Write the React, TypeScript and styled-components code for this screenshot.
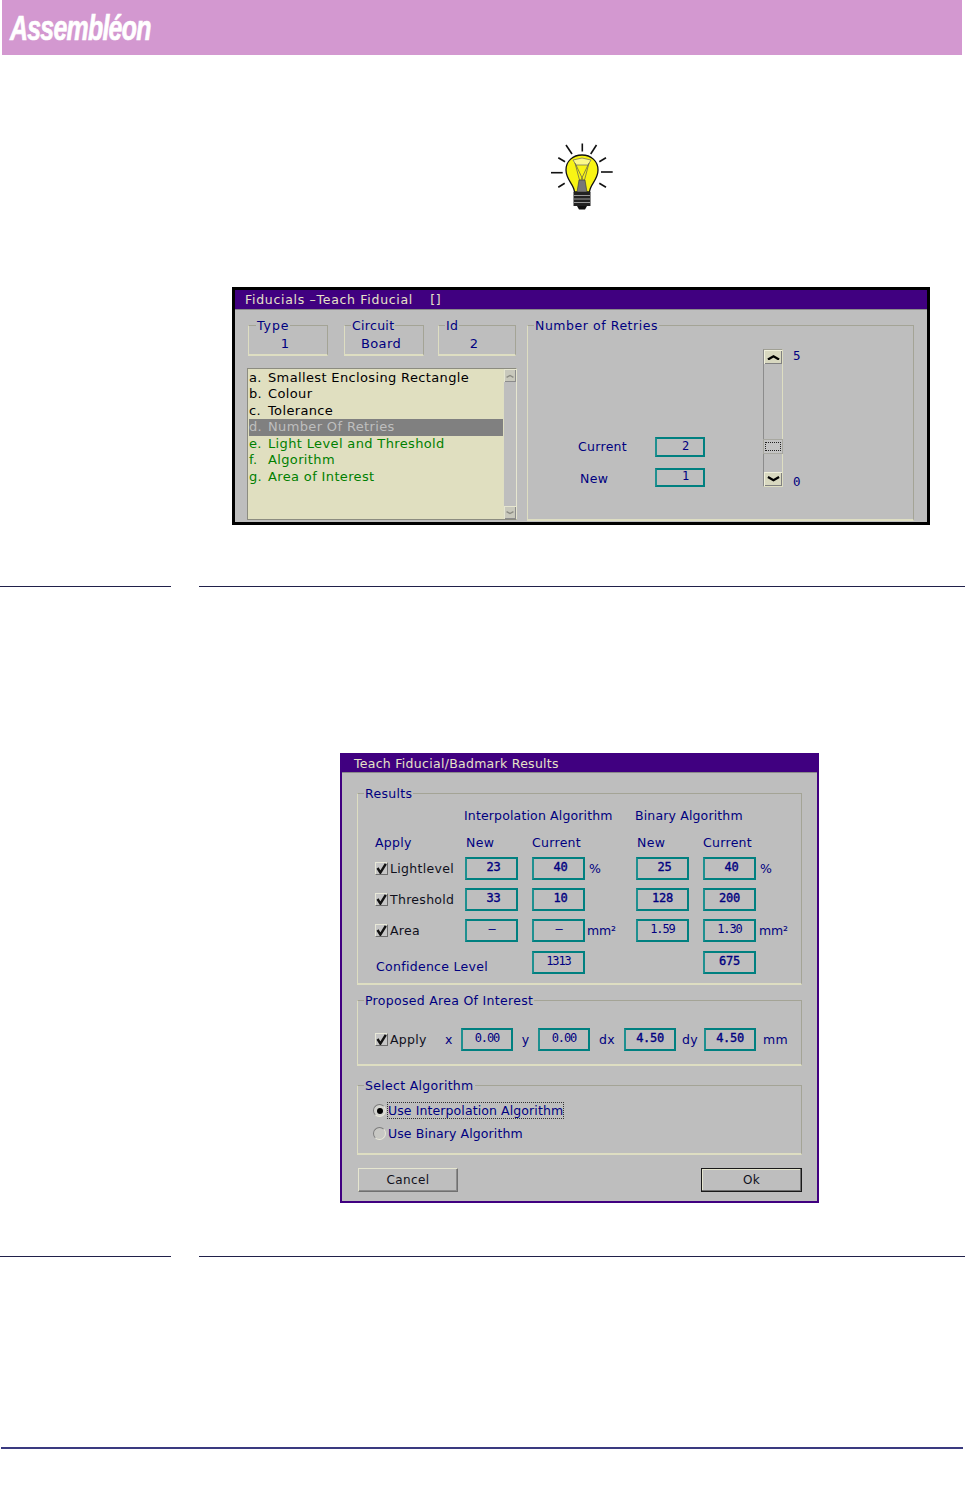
import React from 'react';
import styled, { createGlobalStyle } from 'styled-components';

const Global = createGlobalStyle`
  html, body { margin: 0; padding: 0; background: #fff; }
  body { font-family: "DejaVu Sans", sans-serif; font-size: 13px; color: #000080; }
`;

const Page = styled.div`
  width: 965px;
  height: 1502px;
  overflow: hidden;
`;

const Banner = styled.header`
  margin-left: 2px;
  width: 960px;
  height: 55px;
  background: #d398d0;
  display: flex;
  align-items: flex-end;
  box-sizing: border-box;
  padding: 0 0 12px 8px;
`;

const Logo = styled.span`
  font-family: "Liberation Sans", Arial, sans-serif;
  font-weight: 700;
  font-style: italic;
  font-size: 35px;
  line-height: 30px;
  color: #fff;
  letter-spacing: -1px;
  -webkit-text-stroke: 0.7px #fff;
  transform: scaleX(0.71);
  transform-origin: left bottom;
`;

const Bulb = styled.svg`
  display: block;
  margin: 87px 0 0 550px;
`;

const Rule = styled.div`
  display: flex;
  justify-content: space-between;
  margin-top: ${p => p.$top}px;

  &::before, &::after {
    content: '';
    height: 1px;
    background: #20204a;
  }
  &::before { width: 171px; }
  &::after { width: 766px; }
`;

const FootRule = styled.div`
  margin: 190px 0 0 1px;
  width: 962px;
  height: 2px;
  background: #3a3a80;
`;

const Dialog = styled.section`
  box-sizing: border-box;
  width: ${p => p.$width}px;
  height: ${p => p.$height}px;
  margin: ${p => p.$top}px 0 0 ${p => p.$left}px;
  border: ${p => p.$frame};
  background: #bebebe;
  display: flex;
  flex-direction: column;
`;

const TitleBar = styled.div`
  height: ${p => p.$height}px;
  flex: none;
  background: #400080;
  color: #e6e2c8;
  padding-left: ${p => p.$pad}px;
  line-height: ${p => p.$height}px;
  font-size: 12.5px;
  letter-spacing: ${p => p.$tracking}px;
  white-space: pre;
  border-bottom: 1px solid #8a8a8a;
`;

const FiducialBody = styled.div`
  flex: 1;
  display: flex;
  gap: 10px;
  padding: 8px 13px 2px 12px;
  min-height: 0;
`;

const LeftColumn = styled.div`
  width: 270px;
  display: flex;
  flex-direction: column;
`;

const InfoRow = styled.div`
  display: flex;
  padding-left: 1px;
`;

const Group = styled.fieldset`
  box-sizing: border-box;
  margin: ${p => p.$top || 0}px 0 0 ${p => p.$gapLeft || 0}px;
  min-width: 0;
  padding: 0;
  border-style: solid;
  border-width: 1px 1px 2px 1px;
  border-color: #a4a496 #a4a496 #dedec2 #dedec2;
  ${p => p.$width ? `width: ${p.$width}px;` : ''}
  ${p => p.$height ? `height: ${p.$height}px;` : ''}
`;

const Legend = styled.legend`
  margin-left: ${p => p.$left || 6}px;
  padding: 0 1px;
  font-size: 12.5px;
  line-height: 15px;
  letter-spacing: ${p => p.$tracking || 0.3}px;
  color: #000080;
`;

const InfoValue = styled.div`
  text-align: center;
  padding-right: 6px;
  font-size: 13px;
  line-height: 22px;
  letter-spacing: 0.4px;
`;

const ListBox = styled.div`
  margin-top: 12px;
  height: 152px;
  box-sizing: border-box;
  border: 1px solid;
  border-color: #8c8c80 #e6e6d0 #8c8c80 #8c8c80;
  background: #e0dfc0;
  display: flex;
`;

const ListItems = styled.div`
  flex: 1;
  padding: 1px 0 0 1px;
`;

const ListRow = styled.div`
  display: flex;
  height: 16.45px;
  line-height: 16.45px;
  font-size: 13px;
  letter-spacing: 0.36px;
  white-space: pre;
  color: ${p => p.$done ? '#000' : p.$active ? '#bebebe' : '#008000'};
  background: ${p => p.$active ? '#808080' : 'transparent'};
`;

const Marker = styled.span`
  width: 19px;
  flex: none;
`;

const ListScroll = styled.div`
  width: 12px;
  background: #bebebe;
  display: flex;
  flex-direction: column;
  justify-content: space-between;
  border-left: 1px solid #dedec2;
`;

const ScrollCap = styled.div`
  height: 13px;
  background: #c8c8bc;
  display: flex;
  align-items: center;
  justify-content: center;
  box-shadow: inset 1px 1px 0 #e6e6d0, inset -1px -1px 0 #8c8c8c;
`;

const RetriesBody = styled.div`
  display: flex;
  justify-content: flex-start;
  height: 171px;
`;

const RetriesFields = styled.div`
  width: 128px;
  margin-left: 50px;
  padding-top: 104px;
  display: grid;
  grid-template-columns: 77px 50px;
  grid-template-rows: 20px 19px;
  row-gap: 11px;
  align-items: center;
`;

const Label = styled.span`
  font-size: 12.5px;
  line-height: 14px;
  letter-spacing: 0.3px;
  white-space: pre;
  color: ${p => p.$dark ? '#10101c' : '#000080'};
  ${p => p.$nudge ? `margin-left: ${p.$nudge}px;` : ''}
  ${p => p.$drop ? `padding-top: ${p.$drop}px;` : ''}
  ${p => p.$lift ? `margin-top: -${p.$lift}px;` : ''}
  ${p => p.$center ? 'justify-self: center;' : ''}
`;

const Readout = styled.div`
  box-sizing: border-box;
  width: ${p => p.$width || 53}px;
  height: ${p => p.$height || 23}px;
  flex: none;
  border: 2px solid #008080;
  border-color: #008080 #008080 #008080 #1f9090;
  text-align: center;
  padding-left: ${p => p.$shift || 0}px;
  font-family: "DejaVu Sans Mono", monospace;
  font-size: 12px;
  letter-spacing: ${p => p.$bold ? -0.3 : -1.1}px;
  -webkit-text-stroke: ${p => p.$bold ? '0.35px #000080' : '0'};
  line-height: ${p => (p.$height || 23) - 6}px;
  color: #000080;
`;

const Slider = styled.div`
  margin-left: 57px;
  margin-top: 16px;
  width: 20px;
  height: 138px;
  box-sizing: border-box;
  border: 1px solid;
  border-color: #a0a094 #dedec2 #dedec2 #8c8c8c;
  display: flex;
  flex-direction: column;
  justify-content: space-between;
`;

const SliderCap = styled.div`
  height: 14px;
  background: #d8d8c0;
  box-shadow: inset 1px 1px 0 #f0f0dc, inset -1px -1px 0 #808080;
  display: flex;
  align-items: center;
  justify-content: center;
`;

const SliderThumb = styled.div`
  height: 13px;
  margin-top: 76px;
  margin-bottom: 19px;
  background: #c4c4c4;
  box-shadow: 0 0 0 1px #a8a8a0;
  display: flex;
  padding: 2px 1px;
  box-sizing: border-box;

  &::after {
    content: '';
    flex: 1;
    border: 1px dotted #222;
  }
`;

const SliderEnds = styled.div`
  margin: 16px 0 0 10px;
  height: 140px;
  display: flex;
  flex-direction: column;
  justify-content: space-between;
  font-family: "DejaVu Sans Mono", monospace;
  font-size: 12.5px;
  line-height: 14px;
`;

const ResultsBody = styled.div`
  flex: 1;
  padding: 13px 15px 8px 15px;
  display: flex;
  flex-direction: column;
`;

const ResultsGrid = styled.div`
  display: grid;
  grid-template-columns: 90px 67px 104px 67px 53px auto;
  grid-template-rows: 28px 20px 31px 31px 32px 23px;
  padding: 8px 0 9px 17px;
  align-items: start;
`;

const Heading = styled(Label)`
  grid-column: ${p => p.$span || 'auto'};
  letter-spacing: 0.15px;
  margin-left: -1px;
`;

const Cell = styled.div`
  display: flex;
  align-items: center;
  height: 23px;
`;

const Unit = styled(Label)`
  margin-left: ${p => p.$gap}px;
  letter-spacing: -0.2px;
`;

const Check = styled.span`
  box-sizing: border-box;
  width: 13px;
  height: 13px;
  flex: none;
  margin-right: 2px;
  background: #c6c6c6;
  border: 1px solid;
  border-color: #e8e8d8 #6c6c6c #6c6c6c #e8e8d8;
  display: flex;
  align-items: center;
  justify-content: center;
`;

const ConfidenceLabel = styled(Label)`
  grid-column: 1 / 3;
  display: block;
  padding: 9px 0 0 1px;
`;

const AreaRow = styled.div`
  display: grid;
  grid-template-columns: 70px 16px 52px 25px 52px 34px 52px 28px 52px auto;
  align-items: center;
  padding: 20px 0 13px 17px;
`;

const AlgorithmList = styled.div`
  padding: 9px 0 0 15px;
  display: flex;
  flex-direction: column;
  gap: 6px;
  height: 60px;
  box-sizing: border-box;
`;

const RadioRow = styled.div`
  display: flex;
  align-items: center;
  height: 17px;
`;

const Radio = styled.span`
  box-sizing: border-box;
  width: 13px;
  height: 13px;
  border-radius: 50%;
  background: ${p => p.$on ? '#d4d4d0' : '#c8c8c4'};
  border: 1px solid;
  border-color: #7c7c7c #e8e8d8 #e8e8d8 #7c7c7c;
  display: flex;
  align-items: center;
  justify-content: center;

  &::after {
    content: '';
    display: ${p => p.$on ? 'block' : 'none'};
    width: 6px;
    height: 6px;
    border-radius: 50%;
    background: #000;
  }
`;

const RadioText = styled.span`
  margin-left: 1px;
  font-size: 12.5px;
  line-height: 15px;
  letter-spacing: 0.1px;
  color: #000080;
  border: 1px ${p => p.$focus ? 'dotted #333' : 'solid transparent'};
`;

const Actions = styled.div`
  margin-top: 13px;
  display: flex;
  justify-content: space-between;
  padding: 0 0 0 1px;
`;

const Action = styled.button`
  box-sizing: border-box;
  width: ${p => p.$primary ? 101 : 100}px;
  height: 24px;
  padding: 0;
  background: #bebebe;
  font-family: "DejaVu Sans", sans-serif;
  font-size: 12px;
  letter-spacing: 0.4px;
  color: #10101c;
  border: 1px solid;
  border-color: ${p => p.$primary ? '#1a1a1a' : '#e6e6d0 #707070 #707070 #e6e6d0'};
  box-shadow: ${p => p.$primary
    ? 'inset -1px -1px 0 #707070, inset 1px 1px 0 #e6e6d0'
    : 'inset -1px -1px 0 #8c8c8c'};
`;

const Chevron = ({ up, size = 13, color = '#000' }: { up?: boolean; size?: number; color?: string }) => (
  <svg width={size} height={size * 0.5} viewBox="0 0 14 7">
    <path
      d={up ? 'M1 6 L7 2.5 L13 6' : 'M1 1 L7 4.5 L13 1'}
      fill="none"
      stroke={color}
      strokeWidth="2.4"
    />
  </svg>
);

const Tick = () => (
  <svg width="11" height="11" viewBox="0 0 11 11">
    <path d="M1.5 5 L4.4 9.6 L9.8 0.8" fill="none" stroke="#111" strokeWidth="2.4" />
  </svg>
);

const rays = [
  [582.3, 143.5, 582.3, 151.5],
  [566, 145, 572, 154],
  [596.5, 145, 590.7, 154],
  [558.3, 157.7, 565, 161.7],
  [606, 157.7, 599.3, 161.7],
  [551, 172.7, 562.7, 172.7],
  [601, 172, 612.7, 172],
  [558.3, 187.3, 564.7, 183.3],
  [606, 187.3, 599.3, 183.3]
];

const menu = [
  ['a.', 'Smallest Enclosing Rectangle', 'done'],
  ['b.', 'Colour', 'done'],
  ['c.', 'Tolerance', 'done'],
  ['d.', 'Number Of Retries', 'active'],
  ['e.', 'Light Level and Threshold', ''],
  ['f.', 'Algorithm', ''],
  ['g.', 'Area of Interest', '']
];

const results = [
  { name: 'Lightlevel', values: ['23', '40', '25', '40'], unit: '%' },
  { name: 'Threshold', values: ['33', '10', '128', '200'], unit: '' },
  { name: 'Area', values: ['–', '–', '1.59', '1.30'], unit: 'mm²' }
];

const Value = ({ text }: { text: string }) => (
  <Readout $bold={!text.includes('.') && text.length > 1 && text !== '1313'} $shift={text.length === 2 ? 4 : 0}>
    {text}
  </Readout>
);

export default function App() {
  function renderBulb() {
    return (
      <Bulb width="64" height="70" viewBox="550 142 64 70">
        {rays.map((r, i) => (
          <line key={i} x1={r[0]} y1={r[1]} x2={r[2]} y2={r[3]} stroke="#111" strokeWidth="1.6" />
        ))}
        <path
          d="M574.5 192 C574 184 566 180 566 170 C566 161 573 155 582 155 C591 155 598 161 598 170 C598 180 590 184 589.5 192 Z"
          fill="#f8f414"
          stroke="#111"
          strokeWidth="1.3"
        />
        <path d="M573 160 L582 158 L591 160 L588 165 L576 165 Z" fill="#fbf98a" stroke="#666" strokeWidth="0.7" />
        <path d="M575 163 L580 182 M589 163 L584 182 M576 165 L584 182 M588 165 L580 182" stroke="#555" strokeWidth="0.7" fill="none" />
        <path d="M579 180 L585 180 L587 192 L577 192 Z" fill="#777" stroke="#333" strokeWidth="0.6" />
        <rect x="573.5" y="192" width="17" height="14" fill="#222" />
        <path d="M574 195.5 H590 M574 199 H590 M574 202.5 H590" stroke="#999" strokeWidth="1" />
        <path d="M577 206 H587 L585 209.5 H579 Z" fill="#111" />
      </Bulb>
    );
  }

  function renderFiducialDialog() {
    return (
      <Dialog $width={698} $height={238} $top={75} $left={232} $frame="3px solid #000">
        <TitleBar $height={19} $pad={10} $tracking={0.7}>{'Fiducials –Teach Fiducial   \u2009[]'}</TitleBar>
        <FiducialBody>
          <LeftColumn>
            <InfoRow>
              <Group $width={80} $height={38}>
                <Legend $left={7} $tracking={0.9}>Type</Legend>
                <InfoValue>1</InfoValue>
              </Group>
              <Group $width={80} $height={38} $gapLeft={16}>
                <Legend>Circuit</Legend>
                <InfoValue>Board</InfoValue>
              </Group>
              <Group $width={78} $height={38} $gapLeft={14}>
                <Legend>Id</Legend>
                <InfoValue>2</InfoValue>
              </Group>
            </InfoRow>
            <ListBox>
              <ListItems>
                {menu.map(([mark, text, state]) => (
                  <ListRow key={mark} $done={state === 'done'} $active={state === 'active'}>
                    <Marker>{mark}</Marker>
                    {text}
                  </ListRow>
                ))}
              </ListItems>
              <ListScroll>
                <ScrollCap><Chevron up size={8} color="#8c8c84" /></ScrollCap>
                <ScrollCap><Chevron size={8} color="#8c8c84" /></ScrollCap>
              </ListScroll>
            </ListBox>
          </LeftColumn>
          <Group $width={387} $height={203}>
            <Legend $tracking={0.55}>Number of Retries</Legend>
            <RetriesBody>
              <RetriesFields>
                <Label>Current</Label>
                <Readout $width={50} $height={20} $shift={10}>2</Readout>
                <Label $nudge={2} $drop={3}>New</Label>
                <Readout $width={50} $height={19} $shift={10}>1</Readout>
              </RetriesFields>
              <Slider>
                <SliderCap><Chevron up /></SliderCap>
                <SliderThumb />
                <SliderCap><Chevron /></SliderCap>
              </Slider>
              <SliderEnds>
                <span>5</span>
                <span>0</span>
              </SliderEnds>
            </RetriesBody>
          </Group>
        </FiducialBody>
      </Dialog>
    );
  }

  function renderResultsGroup() {
    return (
      <Group>
        <Legend>Results</Legend>
        <ResultsGrid>
          <span />
          <Heading $span="2 / 4">Interpolation Algorithm</Heading>
          <Heading $span="4 / 6">Binary Algorithm</Heading>
          <span />
          <Label $lift={1}>Apply</Label>
          <Label $nudge={1} $lift={1}>New</Label>
          <Label $lift={1}>Current</Label>
          <Label $nudge={1} $lift={1}>New</Label>
          <Label $lift={1}>Current</Label>
          <span />
          {results.map(row => (
            <React.Fragment key={row.name}>
              <Cell>
                <Check><Tick /></Check>
                <Label $dark>{row.name}</Label>
              </Cell>
              <Cell><Value text={row.values[0]} /></Cell>
              <Cell>
                <Value text={row.values[1]} />
                {row.unit && <Unit $gap={row.unit === '%' ? 4 : 2}>{row.unit}</Unit>}
              </Cell>
              <Cell><Value text={row.values[2]} /></Cell>
              <Cell><Value text={row.values[3]} /></Cell>
              <Cell>{row.unit && <Unit $gap={row.unit === '%' ? 4 : 3}>{row.unit}</Unit>}</Cell>
            </React.Fragment>
          ))}
          <ConfidenceLabel>Confidence Level</ConfidenceLabel>
          <Cell><Value text="1313" /></Cell>
          <span />
          <Cell><Value text="675" /></Cell>
          <span />
        </ResultsGrid>
      </Group>
    );
  }

  function renderResultsDialog() {
    return (
      <Dialog $width={479} $height={450} $top={166} $left={340} $frame="2px solid #400080">
        <TitleBar $height={17} $pad={12} $tracking={0.28}>Teach Fiducial/Badmark Results</TitleBar>
        <ResultsBody>
          {renderResultsGroup()}
          <Group $top={8}>
            <Legend>Proposed Area Of Interest</Legend>
            <AreaRow>
              <Cell>
                <Check><Tick /></Check>
                <Label $dark>Apply</Label>
              </Cell>
              <Label>x</Label>
              <Readout $width={52}>0.00</Readout>
              <Label $center>y</Label>
              <Readout $width={52}>0.00</Readout>
              <Label $center>dx</Label>
              <Readout $width={52} $bold>4.50</Readout>
              <Label $center>dy</Label>
              <Readout $width={52} $bold>4.50</Readout>
              <Label $nudge={7}>mm</Label>
            </AreaRow>
          </Group>
          <Group $top={12}>
            <Legend>Select Algorithm</Legend>
            <AlgorithmList>
              <RadioRow>
                <Radio $on />
                <RadioText $focus>Use Interpolation Algorithm</RadioText>
              </RadioRow>
              <RadioRow>
                <Radio />
                <RadioText>Use Binary Algorithm</RadioText>
              </RadioRow>
            </AlgorithmList>
          </Group>
          <Actions>
            <Action>Cancel</Action>
            <Action $primary>Ok</Action>
          </Actions>
        </ResultsBody>
      </Dialog>
    );
  }

  return (
    <Page>
      <Global />
      <Banner><Logo>Assembléon</Logo></Banner>
      {renderBulb()}
      {renderFiducialDialog()}
      <Rule $top={61} />
      {renderResultsDialog()}
      <Rule $top={53} />
      <FootRule />
    </Page>
  );
}
